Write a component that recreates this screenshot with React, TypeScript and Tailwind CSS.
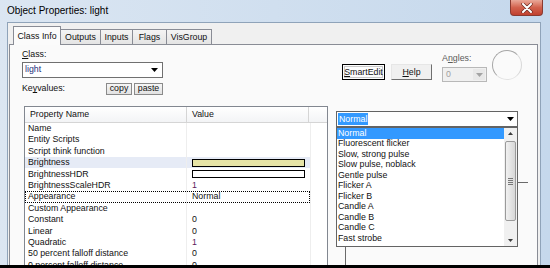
import React from 'react';

const Arrow = ({ disabled }: { disabled?: boolean }) => (
  <svg width="7" height="4" viewBox="0 0 7 4">
    <path d="M0 0h7L3.5 4z" fill={disabled ? '#a3a3a3' : '#000'} />
  </svg>
);

const tabs = [
  { label: 'Class Info', w: 'w-[48px]', active: true },
  { label: 'Outputs', w: 'w-[41px]' },
  { label: 'Inputs', w: 'w-[33px]' },
  { label: 'Flags', w: 'w-[35px]' },
  { label: 'VisGroup', w: 'w-[46px]' },
];

type Row = { name: string; value?: string; kind?: 'swatch' | 'hdr' | 'one'; hl?: boolean; focus?: boolean };

const rows: Row[] = [
  { name: 'Name' },
  { name: 'Entity Scripts' },
  { name: 'Script think function' },
  { name: 'Brightness', kind: 'swatch', hl: true },
  { name: 'BrightnessHDR', kind: 'hdr' },
  { name: 'BrightnessScaleHDR', value: '1', kind: 'one' },
  { name: 'Appearance', value: 'Normal', focus: true },
  { name: 'Custom Appearance' },
  { name: 'Constant', value: '0' },
  { name: 'Linear', value: '0' },
  { name: 'Quadratic', value: '1', kind: 'one' },
  { name: '50 percent falloff distance', value: '0' },
  { name: '0 percent falloff distance', value: '0' },
];

const styles = [
  'Normal',
  'Fluorescent flicker',
  'Slow, strong pulse',
  'Slow pulse, noblack',
  'Gentle pulse',
  'Flicker A',
  'Flicker B',
  'Candle A',
  'Candle B',
  'Candle C',
  'Fast strobe',
];

const App: React.FC = () => {
  return (
    <div className="w-[550px] h-[268px] flex flex-col overflow-hidden bg-gradient-to-r from-[#dbe6f2] to-[#c5d8ec] font-['Liberation_Sans',Arial,sans-serif] text-[8.8px] text-[#111] leading-none">
      {/* title bar */}
      <div className="h-[22px] flex items-start shrink-0">
        <div className="pl-[7px] h-[22px] flex items-center text-[10px] text-black">Object Properties: light</div>
        <div className="ml-auto mr-[7px] w-[33px] h-[16px] rounded-b-[4px] border border-t-0 border-[#8a3a30] bg-gradient-to-b from-[#e9a899] via-[#d2614d] to-[#c0402e] flex items-center justify-center">
          <svg width="12" height="10" viewBox="0 0 12 10">
            <path d="M2 1l8 8M10 1L2 9" stroke="#6b2a22" strokeWidth="3.4" strokeLinecap="round" />
            <path d="M2 1l8 8M10 1L2 9" stroke="#fff" strokeWidth="2" strokeLinecap="round" />
          </svg>
        </div>
      </div>

      {/* client area */}
      <div className="flex-1 ml-[7px] w-[534px] border border-b-0 border-[#8fa3b9] bg-[#f0f0f0] flex flex-col overflow-hidden">
        {/* tabs */}
        <div className="h-[21px] flex items-end pl-[5px] shrink-0">
          {tabs.map((t) =>
            t.active ? (
              <div
                key={t.label}
                className={`${t.w} h-[19px] -mb-px relative z-10 border border-b-0 border-[#898c95] bg-[#fbfbfb] flex items-center justify-center`}
              >
                {t.label}
              </div>
            ) : (
              <div
                key={t.label}
                className={`${t.w} h-[15px] -ml-px border border-b-0 border-[#898c95] bg-gradient-to-b from-[#f4f4f4] to-[#e4e4e4] flex items-center justify-center`}
              >
                {t.label}
              </div>
            )
          )}
        </div>

        {/* tab page */}
        <div className="flex-1 ml-[1px] w-[529px] border border-b-0 border-[#898c95] bg-[#fafafa] flex pl-[12px] pt-px overflow-hidden">
          {/* left column */}
          <div className="w-[305px] flex flex-col shrink-0">
            <div className="mt-[4px] h-[11px] flex items-center">
              <span className="underline">C</span>lass:
            </div>
            <div className="mt-[3px] w-[141px] h-[18px] border border-[#707070] bg-white flex items-center">
              <span className="pl-[2px] text-[#1c2f7a]">light</span>
              <div className="ml-auto mr-[1px] w-[13px] h-[14px] flex items-center justify-center">
                <Arrow />
              </div>
            </div>
            <div className="mt-[5px] h-[12px] flex items-center">
              <div className="w-[84px]">
                Ke<span className="underline">y</span>values:
              </div>
              <div className="w-[26px] h-[12px] border border-[#8a8a8a] bg-gradient-to-b from-[#f6f6f6] to-[#e2e2e2] flex items-center justify-center">copy</div>
              <div className="ml-[2px] w-[29px] h-[12px] border border-[#8a8a8a] bg-gradient-to-b from-[#f6f6f6] to-[#e2e2e2] flex items-center justify-center">paste</div>
            </div>

            {/* property table */}
            <div className="mt-[11px] ml-[2px] w-[304px] flex-1 border border-b-0 border-[#828790] bg-white flex flex-col">
              <div className="h-[16px] shrink-0 flex border-b border-[#d5d5d5] bg-gradient-to-b from-white to-[#f3f4f6]">
                <div className="w-[162px] border-r border-[#d5d5d5] flex items-center pl-[5px]">Property Name</div>
                <div className="w-[122px] border-r border-[#d5d5d5] flex items-center pl-[5px]">Value</div>
                <div className="flex-1" />
              </div>
              {rows.map((r) => (
                <div key={r.name} className="h-[11.4px] shrink-0 flex">
                  <div
                    className={`w-[285px] flex ${r.hl ? 'bg-[#e6ebf6]' : ''} ${
                      r.focus ? 'outline-1 outline-dotted outline-black -outline-offset-1' : ''
                    }`}
                  >
                    <div className="w-[162px] border-r border-[#eeeeee] flex items-center pl-[3px] whitespace-nowrap">{r.name}</div>
                    <div className="w-[122px] flex items-center pl-[5px]">
                      {r.kind === 'swatch' && <div className="w-[113px] h-[8px] border border-black bg-[#e6e4a6]" />}
                      {r.kind === 'hdr' && <div className="w-[113px] h-[8px] border border-black bg-white" />}
                      {r.value && <span className={r.kind === 'one' ? 'text-[#5c1a5c]' : ''}>{r.value}</span>}
                    </div>
                  </div>
                  <div className="flex-1 border-l border-[#eeeeee]" />
                </div>
              ))}
            </div>
          </div>

          {/* right column */}
          <div className="ml-[9px] w-[192px] relative flex flex-col">
            <div className="h-[65px] shrink-0 flex items-start pl-[6px]">
              <div className="mt-[18px] w-[43px] h-[16px] border border-black bg-[#fdfdfd] flex items-center justify-center">
                <div className="w-[39px] h-[12px] border border-[#c8c8c8] flex items-center justify-center">
                  <span className="underline">S</span>martEdit
                </div>
              </div>
              <div className="ml-[6px] mt-[18px] w-[41px] h-[16px] border border-[#e6e6e6] border-r-[#6f6f6f] border-b-[#6f6f6f] bg-[#f0f0f0] flex items-center justify-center">
                <span className="underline">H</span>elp
              </div>
              <div className="ml-[10px] flex flex-col">
                <div className="mt-[7px] h-[11px] flex items-center text-[#5a5a5a]">
                  A<span className="underline">n</span>gles:
                </div>
                <div className="mt-[3px] w-[45px] h-[15px] border border-[#b8b8b8] bg-[#f0f0f0] flex items-center">
                  <span className="pl-[3px] text-[#a0a0a0]">0</span>
                  <div className="ml-auto mr-[1px] w-[12px] h-[11px] bg-[#e8e8e8] flex items-center justify-center">
                    <Arrow disabled />
                  </div>
                </div>
              </div>
              <div className="ml-[5px] mt-[4px] w-[30px] h-[30px] rounded-full border border-[#a6a6a6] border-b-[#e2e2e2] border-r-[#d8d8d8]" />
            </div>

            {/* connector lines behind the list */}
            <div className="absolute left-[9px] top-[136px] w-[183px] h-[130px] border-l border-t border-[#6a6a6a]" />

            {/* dropdown */}
            <div className="relative z-10 w-[182px] h-[16px] border border-[#646464] bg-white flex items-center">
              <span className="ml-[1px] px-[1px] h-[12px] flex items-center bg-[#3399ff] text-white">Normal</span>
              <div className="ml-auto mr-[1px] w-[12px] h-[12px] flex items-center justify-center">
                <Arrow />
              </div>
            </div>
            <div className="relative z-10 w-[182px] h-[120px] border border-[#646464] bg-white flex">
              <div className="flex-1 flex flex-col">
                {styles.map((s, i) => (
                  <div
                    key={s}
                    className={`h-[10.5px] flex items-center pl-[1px] whitespace-nowrap ${i === 0 ? 'bg-[#3399ff] text-white' : ''}`}
                  >
                    {s}
                  </div>
                ))}
              </div>
              <div className="w-[13px] bg-[#f0f0f0] flex flex-col items-center">
                <div className="h-[11px] w-full flex items-center justify-center">
                  <svg width="5" height="3" viewBox="0 0 5 3">
                    <path d="M0 3h5L2.5 0z" fill="#3c3c3c" />
                  </svg>
                </div>
                <div className="mt-[2px] w-[11px] h-[80px] rounded-[2px] border border-[#9a9a9a] bg-gradient-to-r from-[#f1f1f1] to-[#d7d7d7] flex flex-col items-center justify-center gap-[1px]">
                  <div className="w-[5px] h-px bg-[#777]" />
                  <div className="w-[5px] h-px bg-[#777]" />
                  <div className="w-[5px] h-px bg-[#777]" />
                  <div className="w-[5px] h-px bg-[#777]" />
                </div>
                <div className="mt-auto h-[11px] w-full flex items-center justify-center">
                  <svg width="5" height="3" viewBox="0 0 5 3">
                    <path d="M0 0h5L2.5 3z" fill="#3c3c3c" />
                  </svg>
                </div>
              </div>
            </div>
          </div>
        </div>
      </div>

      {/* bottom edge of the capture */}
      <div className="h-[3px] shrink-0 bg-black" />
    </div>
  );
};

export default App;
